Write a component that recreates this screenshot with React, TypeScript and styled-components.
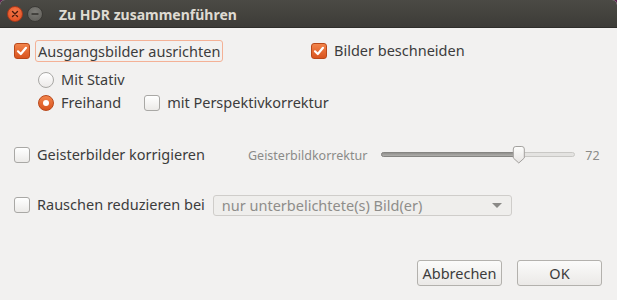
import styled, { createGlobalStyle } from 'styled-components';

const GlobalStyle = createGlobalStyle`
  html, body {
    margin: 0;
    padding: 0;
    background: #5e2750;
  }
  body {
    font-family: 'Noto Sans', 'DejaVu Sans', sans-serif;
  }
`;

const Window = styled.div`
  width: 617px;
  height: 300px;
  display: flex;
  flex-direction: column;
  background: #f2f1f0;
  border-radius: 5px 5px 0 0;
  overflow: hidden;
`;

const TitleBar = styled.div`
  height: 28px;
  flex: none;
  display: flex;
  align-items: center;
  padding-left: 7px;
  background: linear-gradient(to bottom, #4b4a45, #3c3b37);
  box-shadow: inset 0 -1px 0 #2f2e2b;
`;

const WinButton = styled.span<{ $close?: boolean }>`
  width: 16px;
  height: 16px;
  border-radius: 50%;
  margin-right: 4px;
  display: flex;
  align-items: center;
  justify-content: center;
  box-sizing: border-box;
  border: 1px solid ${(p) => (p.$close ? '#a8391b' : '#3a3935')};
  background: ${(p) =>
    p.$close
      ? 'radial-gradient(circle at 50% 35%, #f7794a, #df4a1c)'
      : 'radial-gradient(circle at 50% 35%, #7d7c77, #5c5b56)'};
`;

const Title = styled.div`
  margin-left: 12px;
  font-size: 14px;
  font-weight: bold;
  color: #dfdbd2;
`;

const Body = styled.div`
  flex: 1;
  display: flex;
  flex-direction: column;
  padding: 12px 15px 14px 14px;
  color: #3c3c3c;
  font-size: 14.5px;
`;

const TopGrid = styled.div`
  display: grid;
  grid-template-columns: 297px 1fr;
`;

const Row = styled.div<{ $indent?: number; $top?: number }>`
  height: 22px;
  display: flex;
  align-items: center;
  padding-left: ${(p) => p.$indent ?? 0}px;
  margin-top: ${(p) => p.$top ?? 0}px;
`;

const Box = styled.span<{ $checked?: boolean }>`
  width: 16px;
  height: 16px;
  flex: none;
  box-sizing: border-box;
  border-radius: 3px;
  display: flex;
  align-items: center;
  justify-content: center;
  border: 1px solid ${(p) => (p.$checked ? '#b9481a' : '#a9a8a5')};
  background: ${(p) =>
    p.$checked
      ? 'linear-gradient(to bottom, #f2844b, #d9541f)'
      : 'linear-gradient(to bottom, #ffffff, #eceae8)'};
`;

const RadioDot = styled.span<{ $checked?: boolean }>`
  width: 16px;
  height: 16px;
  flex: none;
  box-sizing: border-box;
  border-radius: 50%;
  display: flex;
  align-items: center;
  justify-content: center;
  border: 1px solid ${(p) => (p.$checked ? '#b9481a' : '#a9a8a5')};
  background: ${(p) =>
    p.$checked
      ? 'linear-gradient(to bottom, #f2844b, #d9541f)'
      : 'linear-gradient(to bottom, #ffffff, #eceae8)'};
  &::after {
    content: '';
    display: ${(p) => (p.$checked ? 'block' : 'none')};
    width: 6px;
    height: 6px;
    border-radius: 50%;
    background: #ffffff;
  }
`;

const Label = styled.span<{ $focus?: boolean }>`
  margin-left: ${(p) => (p.$focus ? 5 : 7)}px;
  padding: ${(p) => (p.$focus ? '0 2px' : '0')};
  height: 22px;
  line-height: 21px;
  box-sizing: border-box;
  white-space: nowrap;
  border-radius: 3px;
  border: ${(p) => (p.$focus ? '1px solid #f4b196' : 'none')};
`;

const Spacer = styled.span<{ $w: number }>`
  width: ${(p) => p.$w}px;
  flex: none;
`;

const SliderLabel = styled.span`
  margin-left: 43px;
  font-size: 12.5px;
  color: #8b8b88;
  white-space: nowrap;
`;

const SliderWrap = styled.span`
  margin-left: 14px;
  display: flex;
  align-items: center;
`;

const SliderValue = styled.span`
  margin-left: 10px;
  font-size: 12.5px;
  color: #8b8b88;
`;

const Combo = styled.div`
  margin-left: 8px;
  width: 299px;
  height: 21px;
  box-sizing: border-box;
  display: flex;
  align-items: center;
  justify-content: space-between;
  padding: 0 9px 0 8px;
  border: 1px solid #cfcdca;
  border-radius: 3px;
  background: #efeeec;
  color: #8e8d8a;
  font-size: 14.5px;
`;

const Arrow = styled.span`
  width: 0;
  height: 0;
  border-left: 5px solid transparent;
  border-right: 5px solid transparent;
  border-top: 5px solid #8a8986;
`;

const ButtonRow = styled.div`
  margin-top: auto;
  display: flex;
  justify-content: flex-end;
  gap: 15px;
`;

const Button = styled.button`
  width: 85px;
  height: 26px;
  box-sizing: border-box;
  border: 1px solid #b3b1ad;
  border-radius: 3px;
  background: linear-gradient(to bottom, #fbfbfa, #ebe9e7);
  font-family: 'Noto Sans', 'DejaVu Sans', sans-serif;
  font-size: 14.5px;
  color: #3c3c3c;
  padding: 0;
`;

const Check = () => (
  <svg width="12" height="12" viewBox="0 0 12 12">
    <path d="M2 6.3 L4.8 9 L10 2.8" fill="none" stroke="#fff" strokeWidth="2.2" strokeLinecap="round" strokeLinejoin="round" />
  </svg>
);

const CheckBox = ({ checked }: { checked?: boolean }) => <Box $checked={checked}>{checked && <Check />}</Box>;

const Slider = ({ value }: { value: number }) => {
  const w = 194;
  const x = 2 + (w - 4) * (value / 100) - 1;
  return (
    <svg width={w} height="20" viewBox={`0 0 ${w} 20`}>
      <defs>
        <linearGradient id="fill" x1="0" y1="0" x2="0" y2="1">
          <stop offset="0" stopColor="#8c8b88" />
          <stop offset="1" stopColor="#b5b4b1" />
        </linearGradient>
        <linearGradient id="thumb" x1="0" y1="0" x2="0" y2="1">
          <stop offset="0" stopColor="#fdfdfc" />
          <stop offset="1" stopColor="#e6e4e2" />
        </linearGradient>
      </defs>
      <rect x="0.5" y="7.5" width={w - 1} height="4" rx="2" fill="#e4e3e1" stroke="#c9c8c5" />
      <rect x="0.5" y="7.5" width={x} height="4" rx="2" fill="url(#fill)" stroke="#868582" />
      <path
        d={`M${x - 5.5} 4 Q${x - 5.5} 1.5 ${x - 3} 1.5 L${x + 3} 1.5 Q${x + 5.5} 1.5 ${x + 5.5} 4 L${x + 5.5} 13 L${x} 18 L${x - 5.5} 13 Z`}
        fill="url(#thumb)"
        stroke="#a3a19e"
        strokeLinejoin="round"
      />
    </svg>
  );
};

export default function App() {
  return (
    <>
      <GlobalStyle />
      <Window>
        <TitleBar>
          <WinButton $close>
            <svg width="8" height="8" viewBox="0 0 8 8">
              <path d="M1.5 1.5 L6.5 6.5 M6.5 1.5 L1.5 6.5" stroke="#4a1a0c" strokeWidth="1.4" strokeLinecap="round" />
            </svg>
          </WinButton>
          <WinButton>
            <svg width="8" height="8" viewBox="0 0 8 8">
              <path d="M1 4 L7 4" stroke="#33322e" strokeWidth="1.4" strokeLinecap="round" />
            </svg>
          </WinButton>
          <Title>Zu HDR zusammenführen</Title>
        </TitleBar>
        <Body>
          <TopGrid>
            <Row>
              <CheckBox checked />
              <Label $focus>Ausgangsbilder ausrichten</Label>
            </Row>
            <Row>
              <CheckBox checked />
              <Label>Bilder beschneiden</Label>
            </Row>
          </TopGrid>
          <Row $indent={24} $top={7}>
            <RadioDot />
            <Label>Mit Stativ</Label>
          </Row>
          <Row $indent={24} $top={1}>
            <RadioDot $checked />
            <Label>Freihand</Label>
            <Spacer $w={23} />
            <CheckBox />
            <Label>mit Perspektivkorrektur</Label>
          </Row>
          <Row $top={30}>
            <CheckBox />
            <Label>Geisterbilder korrigieren</Label>
            <SliderLabel>Geisterbildkorrektur</SliderLabel>
            <SliderWrap>
              <Slider value={72} />
            </SliderWrap>
            <SliderValue>72</SliderValue>
          </Row>
          <Row $top={28}>
            <CheckBox />
            <Label>Rauschen reduzieren bei</Label>
            <Combo>
              <span>nur unterbelichtete(s) Bild(er)</span>
              <Arrow />
            </Combo>
          </Row>
          <ButtonRow>
            <Button>Abbrechen</Button>
            <Button>OK</Button>
          </ButtonRow>
        </Body>
      </Window>
    </>
  );
}
